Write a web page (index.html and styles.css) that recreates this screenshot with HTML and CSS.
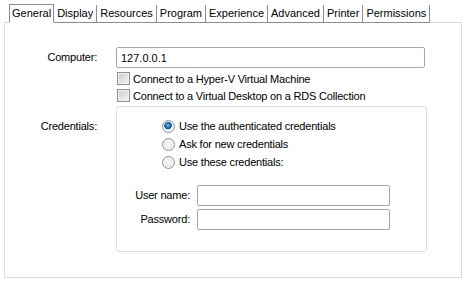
FILE: index.html
```html
<html>
<head>
<link rel="stylesheet" href="styles.css">
</head>
<body>
<div class="tabs">
  <span class="tab active">General</span>
  <span class="tab">Display</span>
  <span class="tab">Resources</span>
  <span class="tab">Program</span>
  <span class="tab">Experience</span>
  <span class="tab">Advanced</span>
  <span class="tab">Printer</span>
  <span class="tab">Permissions</span>
</div>
<div class="panel">
  <div class="form">
    <label class="label">Computer:</label>
    <input class="combo" type="text" value="127.0.0.1">

    <span></span>
    <label class="check first"><input type="checkbox"> Connect to a Hyper-V Virtual Machine</label>

    <span></span>
    <label class="check"><input type="checkbox"> Connect to a Virtual Desktop on a RDS Collection</label>

    <label class="label creds-label">Credentials:</label>
    <div class="group">
      <div class="radios">
        <label class="option"><input class="radio" type="radio" name="cred" checked>Use the authenticated credentials</label>
        <label class="option"><input class="radio" type="radio" name="cred">Ask for new credentials</label>
        <label class="option"><input class="radio" type="radio" name="cred">Use these credentials:</label>
      </div>
      <div class="fields">
        <label class="label">User name:</label>
        <input class="field" type="text">
        <label class="label">Password:</label>
        <input class="field" type="password">
      </div>
    </div>
  </div>
</div>
</body>
</html>
```

FILE: styles.css
```css
body {
  margin: 0;
  padding: 4px 0 0 4px;
  background: #fff;
  font-family: "Liberation Sans", Arial, sans-serif;
  font-size: 11px;
  letter-spacing: -0.2px;
  color: #000;
}

.tabs {
  display: flex;
  margin: 0 0 -1px 5px;
  position: relative;
  letter-spacing: 0;
}

.tab {
  position: relative;
  box-sizing: border-box;
  height: 19px;
  line-height: 18px;
  padding: 0 4px 0 3px;
  border-bottom: 1px solid #898c95;
}

.tab::after {
  content: "";
  position: absolute;
  right: 0;
  top: 1px;
  bottom: 0;
  width: 1px;
  background: #898c95;
}

.tab.active {
  padding: 0 2px;
  border: 1px solid #898c95;
  border-bottom-color: #fff;
  background: #fff;
  line-height: 17px;
}

.tab.active::after {
  display: none;
}

.panel {
  box-sizing: border-box;
  width: 458px;
  height: 256px;
  border: 1px solid #d9dde2;
}

.form {
  display: grid;
  grid-template-columns: 92px 311px;
  column-gap: 19px;
  margin-top: 24px;
}

.label {
  text-align: right;
  line-height: 21px;
  white-space: nowrap;
}

input[type="text"], input[type="password"] {
  box-sizing: border-box;
  height: 21px;
  margin: 0;
  padding: 0 4px;
  border: 1px solid #a8a8a8;
  border-radius: 2px;
  font: inherit;
  outline: 0;
}

.combo {
  width: 309px;
  border-color: #cdd1d6;
}

.check {
  display: flex;
  align-items: center;
  height: 17px;
  white-space: nowrap;
}

.check.first {
  margin-top: 2px;
}

.check input, .radio {
  appearance: none;
  box-sizing: border-box;
  width: 13px;
  height: 13px;
  margin: 0 3px 0 1px;
  border: 1px solid #8e8f8f;
  background: linear-gradient(135deg, #cdcdcd, #f4f4f4);
  box-shadow: inset 0 0 0 1px #f4f4f4;
}

.creds-label {
  padding-top: 12px;
}

.group {
  box-sizing: border-box;
  margin-top: 2px;
  padding: 10px 0 21px 0;
  border: 1px solid #d5dfe5;
  border-radius: 3px;
}

.radios {
  padding-left: 45px;
}

.option {
  display: flex;
  align-items: center;
  height: 18px;
  white-space: nowrap;
}

.radio {
  margin: 0 4px 0 0;
  border-radius: 50%;
  background: radial-gradient(circle at 50% 45%, #fbfbfb 0, #e6e6e6 60%, #cfcfcf 100%);
  box-shadow: inset 0 0 0 1px #f6f6f6;
}

.radio:checked {
  background: radial-gradient(circle at 45% 40%, #8fd2fa 0, #2a86d0 1.5px, #0b4e93 3.5px, #f4f4f4 4.2px, #e3e3e3 100%);
}

.fields {
  display: grid;
  grid-template-columns: 73px 193px;
  column-gap: 7px;
  row-gap: 3px;
  margin-top: 14px;
}

.field {
  width: 193px;
}
```
